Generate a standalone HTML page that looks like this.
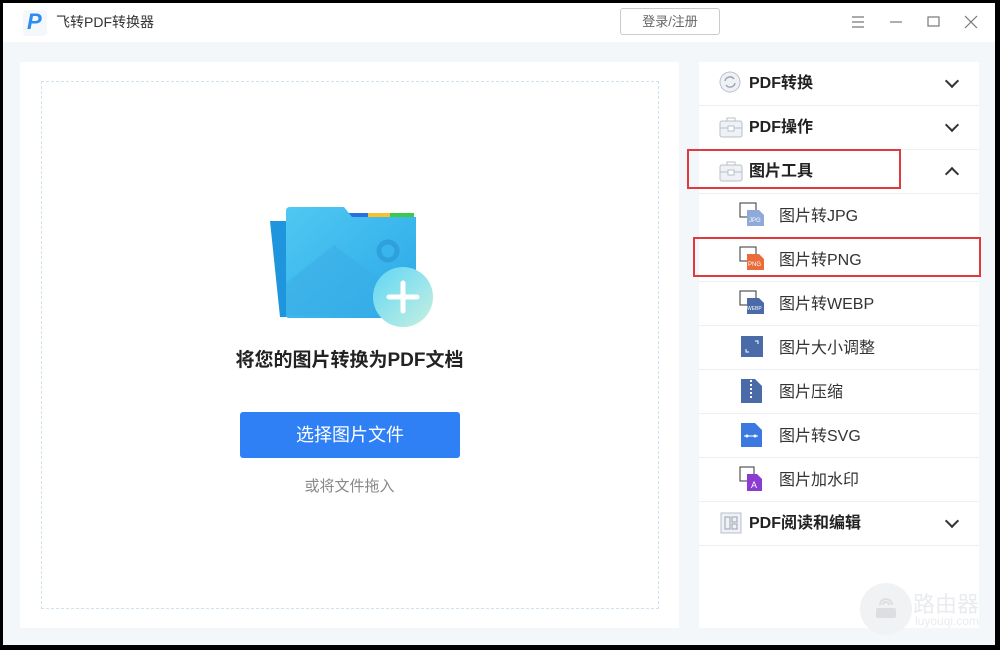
<!DOCTYPE html>
<html><head><meta charset="utf-8"><style>
*{margin:0;padding:0;box-sizing:border-box}
body{width:1000px;height:650px;background:#000;position:relative;overflow:hidden;font-family:"Liberation Sans","Noto Sans CJK SC",sans-serif}
#app{position:absolute;left:3px;top:3px;width:992px;height:642px;background:#f4f7fa}
.title{position:absolute;left:0;top:0;width:992px;height:39px;background:#fff}
.abs{position:absolute}
.left{left:17px;top:59px;width:659px;height:566px;background:#fff}
.dash{left:38px;top:78px;width:618px;height:528px;border:1px dashed #cfe3ef}
.right{left:696px;top:59px;width:280px;height:566px;background:#fff}
.row{position:absolute;left:0;width:280px;height:44px;border-bottom:1px solid #eceef1;font-size:16px;color:#333}
.row .t{position:absolute;left:50px;top:10px;font-weight:bold;color:#222;line-height:24px}
.row .s{position:absolute;left:80px;top:11px;color:#333;font-size:16px;line-height:24px}
.row svg{margin-top:-2px}
.chev{position:absolute;right:22px;top:14px;width:10px;height:10px;border-right:2px solid #333;border-bottom:2px solid #333;transform:rotate(45deg)}
.up{transform:rotate(-135deg);top:19px}
.red{position:absolute;border:2px solid #e0393e}
</style></head><body><div id="app">
<div class="title">
 <div class="abs" style="left:20px;top:7px;width:24px;height:26px;background:#f4f7fb;border-radius:4px"></div>
 <div class="abs" style="left:24px;top:6px;font-size:22px;font-weight:bold;font-style:italic;color:#2d8cf0">P</div>
 <div class="abs" style="left:53px;top:9px;font-size:14px;color:#333">飞转PDF转换器</div>
 <div class="abs" style="left:617px;top:5px;width:100px;height:27px;border:1px solid #c8ccd2;border-radius:3px;font-size:13px;color:#666;text-align:center;line-height:25px">登录/注册</div>
 <svg class="abs" style="left:845px;top:10px" width="130" height="20" fill="none" stroke="#777" stroke-width="1.2"><path d="M4 4h12M4 9h12M4 14h12"/><path d="M42 9h12"/><rect x="80" y="4" width="11" height="9"/><path d="M117 3l12 12M129 3l-12 12"/></svg>
</div>
<div class="abs left"></div>
<div class="abs dash"></div>
<svg class="abs" style="left:265px;top:200px" width="165" height="125">
 <defs><linearGradient id="g" x1="0" y1="0" x2="1" y2="1"><stop offset="0" stop-color="#50c8f2"/><stop offset="1" stop-color="#2aa7e8"/></linearGradient>
 <linearGradient id="c" x1="0" y1="0" x2="1" y2="1"><stop offset="0" stop-color="#5fd6f6"/><stop offset="1" stop-color="#c8f0e0"/></linearGradient></defs>
 <path d="M2 18h20l16 96H12z" fill="#1e95dc"/>
 <rect x="80" y="10" width="20" height="10" fill="#2a6fe0"/><rect x="100" y="10" width="22" height="10" fill="#fbc02d"/><rect x="122" y="10" width="24" height="10" fill="#3cc84a"/>
 <path d="M18 8q0-4 4-4h54l8 10h64v98q0 3-3 3H21q-3 0-3-3z" fill="url(#g)"/>
 <path d="M18 80l48-38 46 34 36-20v56H18z" fill="#3aaee6" opacity=".6"/>
 <circle cx="120" cy="48" r="9" fill="none" stroke="#2fa0dc" stroke-width="5"/>
 <circle cx="135" cy="94" r="30" fill="url(#c)"/>
 <path d="M135 80v28M121 94h28" stroke="#fff" stroke-width="5" stroke-linecap="round"/>
</svg>
<div class="abs" style="left:17px;width:659px;top:342px;text-align:center;font-size:19px;font-weight:bold;color:#222">将您的图片转换为PDF文档</div>
<div class="abs" style="left:237px;top:409px;width:220px;height:46px;background:#2f80f5;border-radius:3px;color:#fff;font-size:18px;text-align:center;line-height:46px">选择图片文件</div>
<div class="abs" style="left:17px;width:659px;top:472px;text-align:center;font-size:15px;color:#888">或将文件拖入</div>
<div class="abs right">
 <div class="row" style="top:0"><svg class="abs" style="left:20px;top:11px" width="22" height="22"><circle cx="11" cy="11" r="10" fill="#eef1f5" stroke="#b8c0cb"/><path d="M6 10a5 5 0 0 1 9-2M16 12a5 5 0 0 1-9 2" stroke="#9aa3ae" fill="none" stroke-width="1.4"/></svg><span class="t">PDF转换</span><i class="chev"></i></div>
 <div class="row" style="top:44px"><svg class="abs" style="left:20px;top:12px" width="24" height="22"><rect x="1" y="5" width="22" height="16" rx="2" fill="#eef1f5" stroke="#b8c0cb"/><path d="M8 5V2h8v3M1 12h22" stroke="#b8c0cb" fill="none"/><rect x="9" y="10" width="6" height="5" fill="#fff" stroke="#b8c0cb"/></svg><span class="t">PDF操作</span><i class="chev"></i></div>
 <div class="row" style="top:88px"><svg class="abs" style="left:20px;top:12px" width="24" height="22"><rect x="1" y="5" width="22" height="16" rx="2" fill="#eef1f5" stroke="#b8c0cb"/><path d="M8 5V2h8v3M1 12h22" stroke="#b8c0cb" fill="none"/><rect x="9" y="10" width="6" height="5" fill="#fff" stroke="#b8c0cb"/></svg><span class="t">图片工具</span><i class="chev up"></i></div>
 <div class="row" style="top:132px"><svg class="abs" style="left:40px;top:10px" width="26" height="24"><rect x="1" y="1" width="16" height="14" fill="#fff" stroke="#333"/><path d="M8 8h12l5 5v11H8z" fill="#8fa9d8"/><text x="10" y="20" font-size="6" fill="#fff">JPG</text></svg><span class="s">图片转JPG</span></div>
 <div class="row" style="top:176px"><svg class="abs" style="left:40px;top:10px" width="26" height="24"><rect x="1" y="1" width="16" height="14" fill="#fff" stroke="#333"/><path d="M8 8h12l5 5v11H8z" fill="#ec6b3b"/><text x="9" y="20" font-size="6" fill="#fff">PNG</text></svg><span class="s">图片转PNG</span></div>
 <div class="row" style="top:220px"><svg class="abs" style="left:40px;top:10px" width="26" height="24"><rect x="1" y="1" width="16" height="14" fill="#fff" stroke="#333"/><path d="M8 8h12l5 5v11H8z" fill="#4a6aa8"/><text x="8" y="20" font-size="5" fill="#fff">WEBP</text></svg><span class="s">图片转WEBP</span></div>
 <div class="row" style="top:264px"><svg class="abs" style="left:40px;top:10px" width="26" height="24"><rect x="2" y="2" width="22" height="21" fill="#4a6aa8"/><path d="M16 7h3v3M10 18H7v-3" stroke="#fff" fill="none"/></svg><span class="s">图片大小调整</span></div>
 <div class="row" style="top:308px"><svg class="abs" style="left:40px;top:10px" width="26" height="26"><path d="M2 1h14l7 7v17H2z" fill="#4a6aa8"/><path d="M12 2v18" stroke="#fff" stroke-dasharray="2 2" stroke-width="2"/></svg><span class="s">图片压缩</span></div>
 <div class="row" style="top:352px"><svg class="abs" style="left:40px;top:10px" width="26" height="26"><path d="M2 1h14l7 7v17H2z" fill="#3b78e0"/><path d="M5 14h14" stroke="#fff"/><circle cx="8" cy="14" r="1.5" fill="#fff"/><circle cx="16" cy="14" r="1.5" fill="#fff"/></svg><span class="s">图片转SVG</span></div>
 <div class="row" style="top:396px"><svg class="abs" style="left:40px;top:10px" width="26" height="26"><rect x="1" y="1" width="14" height="14" fill="#fff" stroke="#333"/><path d="M8 8h10l5 5v12H8z" fill="#8a3bd0"/><text x="12" y="22" font-size="9" fill="#fff">A</text></svg><span class="s">图片加水印</span></div>
 <div class="row" style="top:440px"><svg class="abs" style="left:21px;top:12px" width="22" height="22"><rect x="1" y="1" width="20" height="20" fill="#eef1f5" stroke="#b8c0cb"/><path d="M5 5h5v12H5zM12 5h5v5h-5zM12 12h5v5h-5z" fill="none" stroke="#9aa3ae"/></svg><span class="t">PDF阅读和编辑</span><i class="chev"></i></div>
</div>
<div class="red" style="left:684px;top:146px;width:214px;height:40px"></div>
<div class="red" style="left:690px;top:234px;width:288px;height:40px"></div>
<div class="abs" style="left:857px;top:580px;width:52px;height:52px;border-radius:50%;background:#f1f2f4"></div>
<svg class="abs" style="left:867px;top:590px" width="32" height="32"><path d="M10 12a6 6 0 0 1 12 0M13 12a3 3 0 0 1 6 0" stroke="#dcdee2" stroke-width="2" fill="none"/><rect x="6" y="15" width="20" height="10" rx="2" fill="#dcdee2"/></svg>
<div class="abs" style="left:910px;top:584px;font-size:22px;color:#e9ebee">路由器</div>
<div class="abs" style="left:912px;top:611px;font-size:12px;color:#e9ebee">luyouqi.com</div>
</div></body></html>
